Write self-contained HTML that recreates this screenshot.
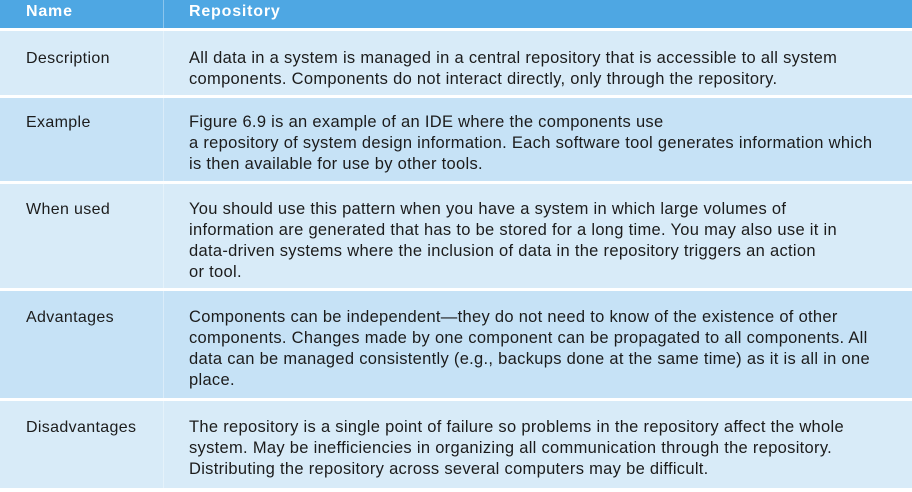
<!DOCTYPE html>
<html><head><meta charset="utf-8"><style>
body{margin:0;width:912px;height:492px;background:#fff;overflow:hidden;font-family:"Liberation Sans",sans-serif;color:#1c1c1c;}
.r{position:absolute;left:0;width:912px;}
.h{background:#4ea7e3;color:#fff;font-weight:bold;font-size:16px;top:0;height:28px;}
.a{background:#d8ebf8}
.b{background:#c6e2f6}
.n{position:absolute;left:26px;font-size:16px;line-height:21px;letter-spacing:0.35px}
.v{position:absolute;left:189px;font-size:16.5px;line-height:21px;white-space:nowrap;letter-spacing:0.3px}
.d{position:absolute;left:163px;top:0;bottom:0;width:1px;background:rgba(255,255,255,0.35)}
</style></head><body>
<div class="r h"><div class="n" style="top:1px;letter-spacing:0.8px">Name</div><div class="v" style="top:1px;font-size:16px;letter-spacing:0.8px">Repository</div><div class="d"></div></div>
<div class="r a" style="top:31px;height:64px"><div class="d"></div><div class="n" style="top:17px">Description</div><div class="v" style="top:17px">All data in a system is managed in a central repository that is accessible to all system<br>components. Components do not interact directly, only through the repository.</div></div>
<div class="r b" style="top:98px;height:83px"><div class="d"></div><div class="n" style="top:14px">Example</div><div class="v" style="top:14px">Figure 6.9 is an example of an IDE where the components use<br>a repository of system design information. Each software tool generates information which<br>is then available for use by other tools.</div></div>
<div class="r a" style="top:184px;height:104px"><div class="d"></div><div class="n" style="top:15px">When used</div><div class="v" style="top:15px">You should use this pattern when you have a system in which large volumes of<br>information are generated that has to be stored for a long time. You may also use it in<br>data-driven systems where the inclusion of data in the repository triggers an action<br>or tool.</div></div>
<div class="r b" style="top:291px;height:107px"><div class="d"></div><div class="n" style="top:16px">Advantages</div><div class="v" style="top:16px">Components can be independent—they do not need to know of the existence of other<br>components. Changes made by one component can be propagated to all components. All<br>data can be managed consistently (e.g., backups done at the same time) as it is all in one<br>place.</div></div>
<div class="r a" style="top:401px;height:87px"><div class="d"></div><div class="n" style="top:16px">Disadvantages</div><div class="v" style="top:16px">The repository is a single point of failure so problems in the repository affect the whole<br>system. May be inefficiencies in organizing all communication through the repository.<br>Distributing the repository across several computers may be difficult.</div></div>
</body></html>
